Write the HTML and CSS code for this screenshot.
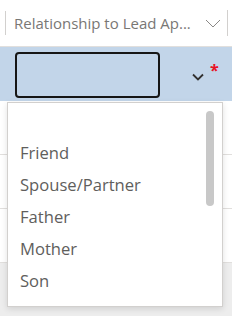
FILE: index.html
```html
<!DOCTYPE html>
<html lang="en">
<head>
  <meta charset="UTF-8">
  <title>Relationship picker</title>
  <link rel="stylesheet" href="styles.css">
</head>
<body>
  <div class="grid">
    <div class="col-header">
      <span class="col-title">Relationship to Lead Ap...</span>
      <svg class="col-chevron" width="16" height="9" viewBox="0 0 16 9">
        <path d="M1 1 L8 8 L15 1" fill="none" stroke="#8a8886" stroke-width="1"/>
      </svg>
    </div>
    <div class="edit-row">
      <div class="edit-input"></div>
      <svg class="edit-chevron" width="12" height="8" viewBox="0 0 12 8">
        <path d="M1 1.5 L6 6.5 L11 1.5" fill="none" stroke="#323130" stroke-width="1.8"/>
      </svg>
      <span class="required">*</span>
    </div>
    <div class="data-row"></div>
    <div class="data-row"></div>
    <div class="data-row"></div>
    <div class="footer"></div>

    <div class="dropdown">
      <ul class="options">
        <li class="empty"></li>
        <li>Friend</li>
        <li>Spouse/Partner</li>
        <li>Father</li>
        <li>Mother</li>
        <li>Son</li>
        <li>Daughter</li>
      </ul>
      <div class="scroll-thumb"></div>
    </div>
  </div>
</body>
</html>
```

FILE: styles.css
```css
body {
  margin: 0;
  font-family: 'Open Sans', 'Noto Sans', sans-serif;
  background-color: #fff;
}

.grid {
  position: relative;
  width: 232px;
  height: 316px;
  overflow: hidden;
  display: flex;
  flex-direction: column;
}

.col-header {
  height: 47px;
  flex-shrink: 0;
  display: flex;
  align-items: center;
  border-bottom: 1px solid #e1dfdd;
  box-sizing: border-box;
  padding-left: 5px;
}

.col-title {
  border-left: 1px solid #d2d0ce;
  height: 24px;
  line-height: 24px;
  padding-left: 8px;
  font-size: 15px;
  color: #797775;
  white-space: nowrap;
}

.col-chevron {
  margin-left: 14px;
  margin-top: 1px;
}

.col-header::after {
  content: "";
  width: 1px;
  height: 26px;
  background-color: #d2d0ce;
  margin-left: 6px;
}

.edit-row {
  height: 54px;
  flex-shrink: 0;
  background-color: #c2d5e9;
  display: flex;
  align-items: center;
  padding-left: 15px;
  box-sizing: border-box;
}

.edit-input {
  width: 145px;
  height: 46px;
  box-sizing: border-box;
  border: 2px solid #161616;
  border-radius: 4px;
  margin-top: 1px;
}

.edit-chevron {
  margin-left: 32px;
  margin-top: 6px;
}

.required {
  color: #e81123;
  font-size: 16px;
  font-weight: bold;
  margin-left: 6px;
  margin-top: -8px;
}

.data-row {
  height: 53px;
  flex-shrink: 0;
  border-bottom: 1px solid #e1dfdd;
}

.footer {
  flex: 1;
  background-color: #ededed;
}

.dropdown {
  position: absolute;
  left: 7px;
  top: 102px;
  width: 216px;
  height: 205px;
  box-sizing: border-box;
  background-color: #fff;
  border: 1px solid #d2d0ce;
  box-shadow: 0 2px 6px rgba(0, 0, 0, 0.12);
  overflow: hidden;
}

.options {
  list-style: none;
  margin: 0;
  padding: 2px 0 0 0;
}

.options li {
  height: 32px;
  line-height: 32px;
  padding-left: 12px;
  font-size: 16.6px;
  color: #605e5c;
}

.scroll-thumb {
  position: absolute;
  left: 198px;
  top: 8px;
  width: 8px;
  height: 95px;
  border-radius: 4px;
  background-color: #c8c8c8;
}
```
